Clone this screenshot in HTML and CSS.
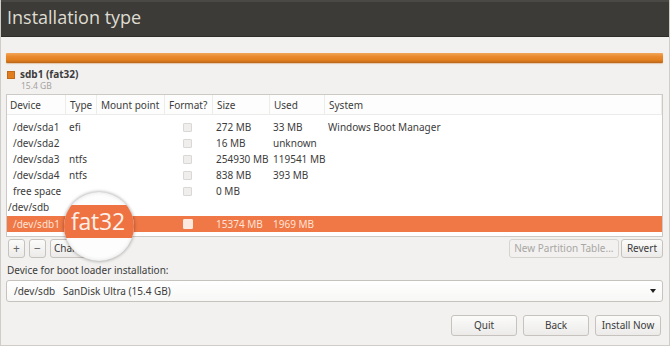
FILE: index.html
```html
<!DOCTYPE html>
<html>
<head>
<meta charset="utf-8">
<link rel="stylesheet" href="styles.css">
</head>
<body>
<div class="window">
  <div class="titlebar"><span class="title">Installation type</span></div>
  <div class="content">
    <div class="diskbar"></div>
    <div class="legend">
      <span class="swatch"></span>
      <div class="legend-text">
        <div class="legend-name">sdb1 (fat32)</div>
        <div class="legend-size">15.4 GB</div>
      </div>
    </div>
    <div class="table">
      <div class="row head">
        <div class="c">Device</div><div class="c">Type</div><div class="c">Mount point</div><div class="c">Format?</div><div class="c">Size</div><div class="c">Used</div><div class="c">System</div>
      </div>
      <div class="rows">
        <div class="row"><div class="c ind">/dev/sda1</div><div class="c">efi</div><div class="c"></div><div class="c chk"><span class="box"></span></div><div class="c">272 MB</div><div class="c">33 MB</div><div class="c">Windows Boot Manager</div></div>
        <div class="row"><div class="c ind">/dev/sda2</div><div class="c"></div><div class="c"></div><div class="c chk"><span class="box"></span></div><div class="c">16 MB</div><div class="c">unknown</div><div class="c"></div></div>
        <div class="row"><div class="c ind">/dev/sda3</div><div class="c">ntfs</div><div class="c"></div><div class="c chk"><span class="box"></span></div><div class="c">254930 MB</div><div class="c">119541 MB</div><div class="c"></div></div>
        <div class="row"><div class="c ind">/dev/sda4</div><div class="c">ntfs</div><div class="c"></div><div class="c chk"><span class="box"></span></div><div class="c">838 MB</div><div class="c">393 MB</div><div class="c"></div></div>
        <div class="row"><div class="c ind">free space</div><div class="c"></div><div class="c"></div><div class="c chk"><span class="box"></span></div><div class="c">0 MB</div><div class="c"></div><div class="c"></div></div>
        <div class="row"><div class="c">/dev/sdb</div><div class="c"></div><div class="c"></div><div class="c"></div><div class="c"></div><div class="c"></div><div class="c"></div></div>
        <div class="row sel"><div class="c ind">/dev/sdb1</div><div class="c"></div><div class="c"></div><div class="c chk"><span class="box"></span></div><div class="c">15374 MB</div><div class="c">1969 MB</div><div class="c"></div></div>
      </div>
    </div>
    <div class="toolrow">
      <div class="tools-left">
        <button class="btn small">+</button>
        <button class="btn small">−</button>
        <button class="btn change">Change...</button>
      </div>
      <div class="tools-right">
        <button class="btn disabled">New Partition Table...</button>
        <button class="btn">Revert</button>
      </div>
    </div>
    <div class="bootlabel">Device for boot loader installation:</div>
    <div class="combo">
      <span class="combo-text">/dev/sdb&nbsp;&nbsp;&nbsp;SanDisk Ultra (15.4 GB)</span>
      <span class="arrow"></span>
    </div>
    <div class="actions">
      <button class="btn act">Quit</button>
      <button class="btn act">Back</button>
      <button class="btn act">Install Now</button>
    </div>
  </div>
  <div class="magnifier">
    <div class="mag-band">fat32</div>
  </div>
</div>
</body>
</html>
```

FILE: styles.css
```css
* { box-sizing: border-box; }
html, body { margin: 0; padding: 0; }
body {
  width: 670px;
  height: 346px;
  background: #f2f1f0;
  font-family: "Noto Sans", "Open Sans", sans-serif;
  font-size: 10px;
  color: #3c3c3c;
  overflow: hidden;
}
.window {
  position: relative;
  width: 670px;
  height: 346px;
  border-left: 1px solid #d0cdc8;
  border-right: 1px solid #d0cdc8;
  border-bottom: 1px solid #d0cdc8;
}
.titlebar {
  height: 37px;
  background: #3c3b37;
  border-top: 2px solid #4a4945;
  border-bottom: 1px solid #2e2d2a;
  display: flex;
  align-items: center;
  padding-left: 6px;
}
.title {
  color: #dfdbd2;
  font-size: 18px;
  font-family: "Open Sans", "Noto Sans", sans-serif;
  margin-top: -5px;
}
.content {
  padding: 0 6px 0 5px;
}
.diskbar {
  margin-top: 16px;
  height: 10px;
  border-radius: 1px;
  background: linear-gradient(#f2a659 0%, #e98a2f 35%, #e3801f 70%, #b9651a 100%);
  box-shadow: 0 1px 1px rgba(200,120,40,0.35);
}
.legend {
  margin-top: 6px;
  display: flex;
  align-items: flex-start;
  gap: 5px;
  padding-left: 1px;
}
.swatch {
  width: 8px;
  height: 8px;
  margin-top: 2px;
  background: #e27d1e;
  border: 1px solid #c46a15;
}
.legend-name {
  font-weight: bold;
  font-size: 10px;
  line-height: 11px;
  color: #3c3c3c;
}
.legend-size {
  font-size: 8.5px;
  line-height: 11px;
  color: #a5a29e;
  padding-left: 1px;
}
.table {
  margin-top: 3px;
  height: 143px;
  background: #fff;
  border: 1px solid #cdcac5;
  overflow: hidden;
}
.row {
  display: grid;
  grid-template-columns: 59px 31px 68px 48px 57px 55px 1fr;
  height: 16px;
  line-height: 16px;
  white-space: nowrap;
}
.row.head {
  height: 20px;
  line-height: 20px;
  background: #fdfdfd;
  border-bottom: 1px solid #ebebea;
}
.row.head .c {
  padding-left: 4px;
  border-right: 1px solid #ececeb;
}
.row.head .c:first-child { padding-left: 3px; }
.rows { padding-top: 4px; }
.c {
  padding-left: 3px;
  overflow: visible;
}
.c:first-child { padding-left: 1px; }
.c.ind { padding-left: 6px; }
.chk {
  display: flex;
  align-items: center;
  padding-left: 18px;
}
.box {
  width: 9px;
  height: 9px;
  border: 1px solid #dad8d5;
  background: #efeeed;
  border-radius: 1px;
}
.row.sel {
  background: #f07746;
  color: #fde3d6;
  margin-top: 1px;
}
.row.sel .box {
  width: 10px;
  height: 10px;
  background: #fbe9e0;
  border-color: #fbe9e0;
}
.toolrow {
  margin-top: 2px;
  display: flex;
  justify-content: space-between;
  align-items: center;
  height: 19px;
}
.tools-left, .tools-right {
  display: flex;
  height: 19px;
}
.tools-left { padding-left: 2px; gap: 4px; }
.tools-right { gap: 2px; }
.btn {
  font-family: "Noto Sans", "Open Sans", sans-serif;
  font-size: 10px;
  color: #3c3c3c;
  background: linear-gradient(#fbfbfa, #ecebe9);
  border: 1px solid #c6c3be;
  border-radius: 3px;
  padding: 0 5px;
  height: 19px;
  line-height: 17px;
  margin: 0;
  white-space: nowrap;
}
.btn.small {
  width: 17px;
  padding: 0;
  color: #666;
  font-size: 12px;
}
.btn.change { width: 60px; text-align: left; padding-left: 3px; }
.btn.disabled {
  color: #a9a7a3;
  background: #f2f1f0;
  border-color: #d6d4d0;
  width: 110px;
  padding: 0 3px;
}
.bootlabel {
  margin-top: 5px;
  padding-left: 1px;
  line-height: 14px;
  height: 14px;
}
.combo {
  margin-top: 3px;
  height: 22px;
  background: linear-gradient(#ffffff, #f7f7f6);
  border: 1px solid #c6c3be;
  border-radius: 3px;
  display: flex;
  align-items: center;
  justify-content: space-between;
  padding: 0 6px 0 7px;
}
.arrow {
  width: 0;
  height: 0;
  border-left: 3px solid transparent;
  border-right: 3px solid transparent;
  border-top: 4px solid #222;
}
.actions {
  margin-top: 13px;
  display: flex;
  justify-content: flex-end;
  gap: 6px;
  padding-right: 2px;
}
.btn.act {
  width: 66px;
  height: 21px;
  text-align: center;
  padding: 0;
  line-height: 19px;
}
.magnifier {
  position: absolute;
  left: 63px;
  top: 192px;
  width: 70px;
  height: 69px;
  border-radius: 50%;
  background: #fdfdfd;
  box-shadow: 0 0 3px 1px rgba(0,0,0,0.25), inset 0 0 4px rgba(0,0,0,0.12);
  overflow: hidden;
}
.mag-band {
  margin-top: 13px;
  height: 33px;
  background: #ef7342;
  color: #fdf0ea;
  font-family: "Open Sans", "Noto Sans", sans-serif;
  font-size: 23px;
  line-height: 32px;
  padding-left: 7px;
  letter-spacing: -0.2px;
}
```
